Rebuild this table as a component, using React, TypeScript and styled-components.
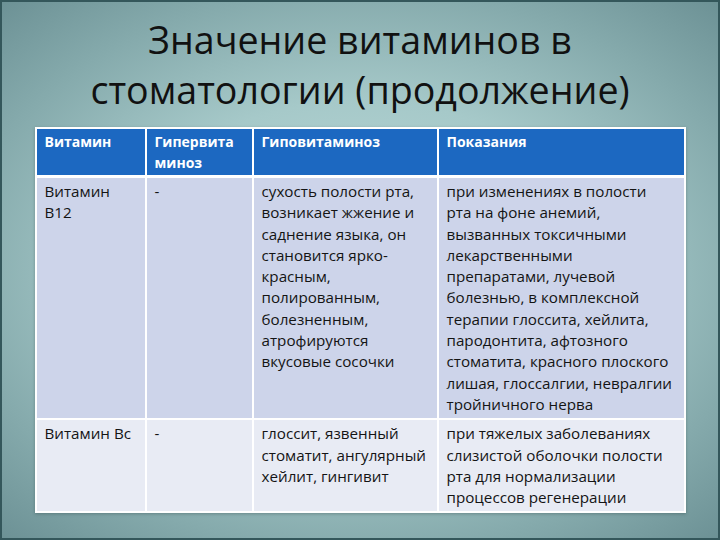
import React from 'react';
import styled, { createGlobalStyle } from 'styled-components';

const GlobalStyle = createGlobalStyle`
  html, body {
    margin: 0;
    padding: 0;
  }
  #root {
    width: 720px;
    height: 540px;
  }
`;

const Slide = styled.div`
  box-sizing: border-box;
  width: 720px;
  height: 540px;
  border: 2px solid #34575b;
  background: radial-gradient(
    ellipse 75% 70% at 50% 50%,
    #c0dcdb 0%,
    #a6c9c9 45%,
    #85aaac 75%,
    #6a8f93 100%
  );
  display: flex;
  flex-direction: column;
  align-items: center;
  font-family: 'Open Sans', 'Noto Sans', sans-serif;
`;

const Title = styled.h1`
  margin: 13px 0 0;
  font-size: 37.6px;
  font-weight: 400;
  line-height: 50px;
  color: #111;
  text-align: center;
`;

const Table = styled.table`
  margin-top: 12px;
  width: 649px;
  table-layout: fixed;
  border-collapse: collapse;
  border: 2px solid #fff;
  box-shadow: 0 1px 3px rgba(40, 60, 60, 0.35);
`;

const HeadCell = styled.th`
  background: #1c68c1;
  color: #fff;
  font-weight: 700;
  font-size: 14px;
  line-height: 21px;
  text-align: left;
  vertical-align: top;
  padding: 2px 8px 2px;
  border: 2px solid #fff;
  border-bottom-width: 3px;
`;

const BodyCell = styled.td<{ $shade: 'dark' | 'light' }>`
  background: ${({ $shade }) => ($shade === 'dark' ? '#cdd4ea' : '#e8ebf4')};
  color: #141414;
  font-size: 15.2px;
  line-height: 21.3px;
  white-space: nowrap;
  vertical-align: top;
  padding: 3px 8px 3px;
  border: 2px solid #fff;
`;

const Lines = ({ lines }: { lines: string[] }) => (
  <>
    {lines.map((line, i) => (
      <React.Fragment key={i}>
        {i > 0 && <br />}
        {line}
      </React.Fragment>
    ))}
  </>
);

const columns = [110, 107, 185, 247];

const header = [['Витамин'], ['Гипервита', 'миноз'], ['Гиповитаминоз'], ['Показания']];

const rows: { shade: 'dark' | 'light'; cells: string[][] }[] = [
  {
    shade: 'dark',
    cells: [
      ['Витамин', 'B12'],
      ['-'],
      [
        'сухость полости рта,',
        'возникает жжение и',
        'саднение языка, он',
        'становится ярко-',
        'красным,',
        'полированным,',
        'болезненным,',
        'атрофируются',
        'вкусовые сосочки',
      ],
      [
        'при изменениях в полости',
        'рта на фоне анемий,',
        'вызванных токсичными',
        'лекарственными',
        'препаратами, лучевой',
        'болезнью, в комплексной',
        'терапии глоссита, хейлита,',
        'пародонтита, афтозного',
        'стоматита, красного плоского',
        'лишая, глоссалгии, невралгии',
        'тройничного нерва',
      ],
    ],
  },
  {
    shade: 'light',
    cells: [
      ['Витамин Вс'],
      ['-'],
      ['глоссит, язвенный', 'стоматит, ангулярный', 'хейлит, гингивит'],
      [
        'при тяжелых заболеваниях',
        'слизистой оболочки полости',
        'рта для нормализации',
        'процессов регенерации',
      ],
    ],
  },
];

export default function App() {
  return (
    <>
      <GlobalStyle />
      <Slide>
        <Title>
          Значение витаминов в
          <br />
          стоматологии (продолжение)
        </Title>
        <Table>
          <colgroup>
            {columns.map((w, i) => (
              <col key={i} style={{ width: w }} />
            ))}
          </colgroup>
          <thead>
            <tr>
              {header.map((lines, i) => (
                <HeadCell key={i}>
                  <Lines lines={lines} />
                </HeadCell>
              ))}
            </tr>
          </thead>
          <tbody>
            {rows.map((row, r) => (
              <tr key={r}>
                {row.cells.map((lines, c) => (
                  <BodyCell key={c} $shade={row.shade}>
                    <Lines lines={lines} />
                  </BodyCell>
                ))}
              </tr>
            ))}
          </tbody>
        </Table>
      </Slide>
    </>
  );
}
